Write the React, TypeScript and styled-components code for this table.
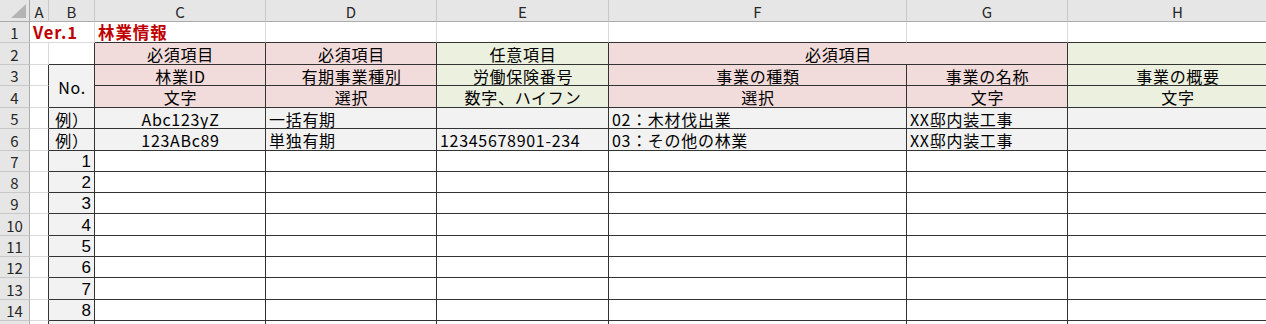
import { FC } from "react";
import styled, { createGlobalStyle, css } from "styled-components";

const GlobalStyle = createGlobalStyle`
  html, body {
    margin: 0;
    padding: 0;
    background: #ffffff;
    overflow: hidden;
  }
  body {
    font-family: "Noto Sans CJK JP", "Noto Sans", sans-serif;
    color: #000;
  }
`;

type Fill = "pink" | "green" | "gray" | "white";
type Line = "dark" | "light";
type Align = "left" | "center" | "right";

const FILLS: Record<Fill, string> = {
  pink: "#f2dcdb",
  green: "#ebf1de",
  gray: "#f2f2f2",
  white: "#ffffff",
};

const LINES: Record<Line, string> = {
  dark: "#333333",
  light: "#d9d9d9",
};

const COLUMN_WIDTHS = [30, 19, 46, 171, 171, 172, 298, 161, 220];
const ROW_HEIGHTS = [22, 21, 22, 21, 22, 21, 22, 21, 21, 21, 22, 21, 21, 22, 21, 21];

const Sheet = styled.div`
  display: grid;
  grid-template-columns: ${COLUMN_WIDTHS.map((w) => `${w}px`).join(" ")};
  grid-template-rows: ${ROW_HEIGHTS.map((h) => `${h}px`).join(" ")};
  width: 1288px;
  height: 324px;
  overflow: hidden;
`;

const HeaderCell = styled.div<{ $row?: boolean }>`
  box-sizing: border-box;
  display: flex;
  align-items: center;
  justify-content: center;
  background: #e6e6e6;
  border-right: 1px solid ${(p) => (p.$row ? "#ababab" : "#c8c8c8")};
  border-bottom: 1px solid ${(p) => (p.$row ? "#c8c8c8" : "#ababab")};
  font-family: "Noto Sans CJK JP", "Noto Sans", sans-serif;
  font-size: 15px;
  line-height: 1;
  padding-top: 1px;
  color: #262626;
`;

const Corner = styled(HeaderCell)`
  align-items: flex-end;
  justify-content: flex-end;
  padding: 0 3px 3px 0;
  border-right-color: #ababab;
  border-bottom-color: #ababab;
`;

const Cell = styled.div<{
  $fill: Fill;
  $r: Line;
  $b: Line;
  $align: Align;
  $span: number;
  $rowSpan: number;
  $red: boolean;
}>`
  box-sizing: border-box;
  display: flex;
  align-items: center;
  overflow: visible;
  white-space: nowrap;
  padding: 1px 2px 0 3px;
  background: ${(p) => FILLS[p.$fill]};
  border-right: 1px solid ${(p) => LINES[p.$r]};
  border-bottom: 1px solid ${(p) => LINES[p.$b]};
  grid-column: span ${(p) => p.$span};
  grid-row: span ${(p) => p.$rowSpan};
  justify-content: ${(p) =>
    p.$align === "left" ? "flex-start" : p.$align === "right" ? "flex-end" : "center"};
  font-size: 16px;
  line-height: 1;
  letter-spacing: 0.7px;
  ${(p) =>
    p.$align === "right" &&
    css`
      font-family: "Liberation Sans", "Noto Sans", sans-serif;
      font-size: 17px;
      letter-spacing: 0;
      padding-right: 3px;
    `}
  ${(p) =>
    p.$red &&
    css`
      color: #c00000;
      font-size: 16.5px;
      font-weight: 700;
      letter-spacing: 0.9px;
    `}
`;

type CellDef = {
  text?: string;
  fill?: Fill;
  span?: number;
  rowSpan?: number;
  align?: Align;
  r?: Line;
  b?: Line;
  red?: boolean;
};

const D: Line = "dark";
const L: Line = "light";

const t = (text: string, fill: Fill, extra: Partial<CellDef> = {}): CellDef => ({
  text,
  fill,
  r: D,
  b: D,
  ...extra,
});

const rowA = (r: Line, b: Line): CellDef => ({ r, b });

const sampleRow = (
  no: string,
  id: string,
  kind: string,
  insurance: string,
  business: string,
  name: string
): CellDef[] => [
  rowA(D, L),
  t(no, "gray"),
  t(id, "gray"),
  t(kind, "gray", { align: "left" }),
  t(insurance, "gray", { align: "left" }),
  t(business, "gray", { align: "left" }),
  t(name, "gray", { align: "left" }),
  t("", "gray"),
];

const entryRow = (n: string): CellDef[] => [
  rowA(D, L),
  t(n, "gray", { align: "right" }),
  t("", "white"),
  t("", "white"),
  t("", "white"),
  t("", "white"),
  t("", "white"),
  t("", "white"),
];

const ROWS: CellDef[][] = [
  [
    { text: "Ver.1", span: 2, red: true, align: "left", r: L, b: L },
    { text: "林業情報", red: true, align: "left", r: L, b: D },
    { r: L, b: D },
    { r: L, b: D },
    { r: L, b: D },
    { r: L, b: D },
    { r: L, b: D },
  ],
  [
    rowA(L, L),
    { r: D, b: D },
    t("必須項目", "pink"),
    t("必須項目", "pink"),
    t("任意項目", "green"),
    t("必須項目", "pink", { span: 2 }),
    t("", "green"),
  ],
  [
    rowA(D, L),
    t("No.", "gray", { rowSpan: 2 }),
    t("林業ID", "pink"),
    t("有期事業種別", "pink"),
    t("労働保険番号", "green"),
    t("事業の種類", "pink"),
    t("事業の名称", "pink"),
    t("事業の概要", "green"),
  ],
  [
    rowA(D, L),
    t("文字", "pink"),
    t("選択", "pink"),
    t("数字、ハイフン", "green"),
    t("選択", "pink"),
    t("文字", "pink"),
    t("文字", "green"),
  ],
  sampleRow("例）", "Abc123yZ", "一括有期", "", "02：木材伐出業", "XX邸内装工事"),
  sampleRow("例）", "123ABc89", "単独有期", "12345678901-234", "03：その他の林業", "XX邸内装工事"),
  ...["1", "2", "3", "4", "5", "6", "7", "8", ""].map(entryRow),
];

const COLUMN_NAMES = ["A", "B", "C", "D", "E", "F", "G", "H"];
const VISIBLE_ROW_LABELS = 14;

const SelectAll: FC = () => (
  <svg width="15" height="14" viewBox="0 0 15 14">
    <polygon points="15,0 15,14 0,14" fill="#b4b4b4" />
  </svg>
);

export default function App() {
  return (
    <>
      <GlobalStyle />
      <Sheet>
        <Corner>
          <SelectAll />
        </Corner>
        {COLUMN_NAMES.map((name) => (
          <HeaderCell key={name}>{name}</HeaderCell>
        ))}
        {ROWS.map((cells, i) => [
          <HeaderCell $row key={`h${i}`}>
            {i < VISIBLE_ROW_LABELS ? i + 1 : ""}
          </HeaderCell>,
          ...cells.map((c, j) => (
            <Cell
              key={`c${i}-${j}`}
              $fill={c.fill ?? "white"}
              $r={c.r ?? L}
              $b={c.b ?? L}
              $align={c.align ?? "center"}
              $span={c.span ?? 1}
              $rowSpan={c.rowSpan ?? 1}
              $red={!!c.red}
            >
              {c.text}
            </Cell>
          )),
        ])}
      </Sheet>
    </>
  );
}
